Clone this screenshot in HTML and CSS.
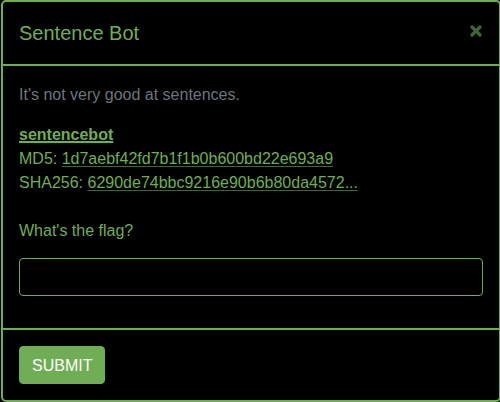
FILE: index.html
```html
<!DOCTYPE html>
<html lang="en">
<head>
<meta charset="utf-8">
<meta name="viewport" content="width=device-width, initial-scale=1">
<title>Sentence Bot</title>
<link rel="stylesheet" href="styles.css">
</head>
<body>
<form class="modal" onsubmit="return false">
  <header class="modal-header">
    <h1 class="modal-title">Sentence Bot</h1>
    <button class="close" type="button" aria-label="Close">
      <svg class="close-icon" viewBox="0 0 12 12" aria-hidden="true"><path d="M2 2L10 10M10 2L2 10"/></svg>
    </button>
  </header>
  <div class="modal-body">
    <p class="description">It's not very good at sentences.</p>
    <div class="file">
      <div><a class="file-name" href="#">sentencebot</a></div>
      <div>MD5: <a class="hash" href="#">1d7aebf42fd7b1f1b0b600bd22e693a9</a></div>
      <div>SHA256: <a class="hash" href="#">6290de74bbc9216e90b6b80da4572...</a></div>
    </div>
    <label class="flag-label" for="flag">What's the flag?</label>
    <input class="flag-input" id="flag" type="text">
  </div>
  <footer class="modal-footer">
    <button class="submit" type="submit">SUBMIT</button>
  </footer>
</form>
</body>
</html>
```
FILE: styles.css
```css
* {
  box-sizing: border-box;
}

body {
  margin: 0;
  background: #000;
  color: #6fae54;
  font: 16px/24px "Liberation Sans", Arial, sans-serif;
  overflow: hidden;
}

.modal {
  margin: 0 -1px 0 1px;
  border: 2px solid #6fae54;
  border-radius: 5px;
  background: #000;
}

.modal-header {
  display: flex;
  align-items: flex-start;
  justify-content: space-between;
  padding: 16px;
  border-bottom: 2px solid #6fae54;
}

.modal-title {
  margin: 0;
  font-size: 20px;
  font-weight: 400;
  line-height: 30px;
}

.close {
  display: flex;
  padding: 7px 1px;
  border: 0;
  background: none;
  cursor: pointer;
}

.close-icon {
  width: 12px;
  height: 12px;
  fill: none;
  stroke: #3f6733;
  stroke-width: 3.2;
  stroke-linecap: round;
}

.modal-body {
  padding: 17px 16px 16px;
}

.description {
  margin: 0 0 16px;
  color: #6c757d;
}

.file {
  margin-bottom: 24px;
}

a {
  color: inherit;
  text-decoration: underline;
  text-decoration-skip-ink: none;
}

.file-name {
  font-weight: 700;
  text-decoration-thickness: 2px;
  text-underline-offset: 1px;
}

.hash {
  text-decoration-color: #3f6733;
  text-decoration-thickness: 1px;
  text-underline-offset: 2px;
}

.flag-label {
  display: block;
  margin-bottom: 15px;
}

.flag-input {
  display: block;
  width: 100%;
  height: 38px;
  margin-bottom: 16px;
  padding: 6px 12px;
  border: 1px solid #6fae54;
  border-radius: 4px;
  background: #000;
  color: inherit;
  font: inherit;
}

.modal-footer {
  padding: 16px;
  border-top: 2px solid #6fae54;
}

.submit {
  display: block;
  height: 38px;
  padding: 2px 12px 0;
  border: 1px solid #6fae54;
  border-radius: 4px;
  background: #6fae54;
  color: #fff;
  font: inherit;
  cursor: pointer;
}
```
